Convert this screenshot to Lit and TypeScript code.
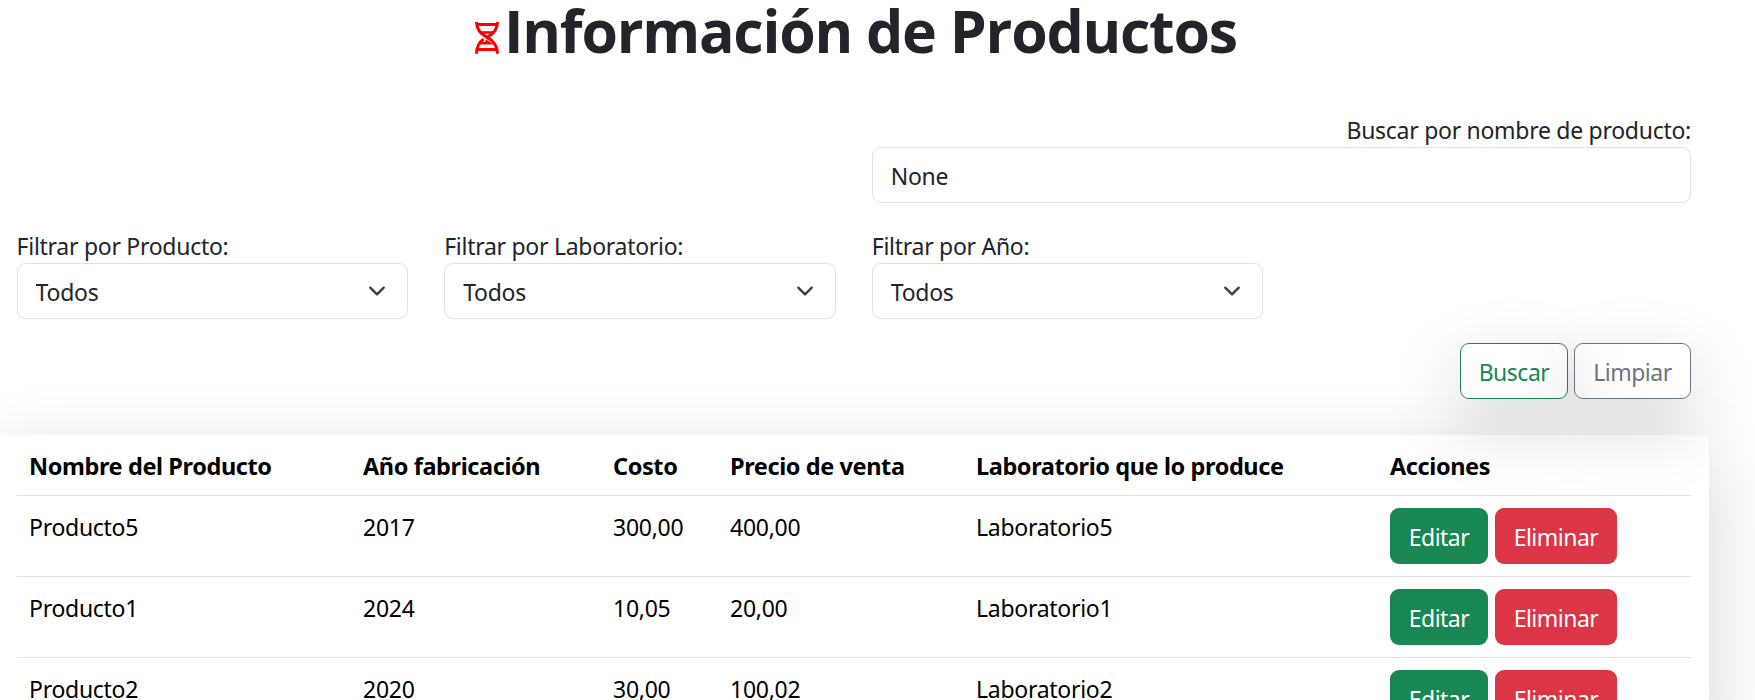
import { LitElement, html, css } from 'lit';
import { customElement, state } from 'lit/decorators.js';

interface Product {
  name: string;
  year: string;
  cost: string;
  price: string;
  lab: string;
}

@customElement('app-root')
export class AppRoot extends LitElement {
  static styles = css`
    :host {
      display: block;
      width: 1755px;
      height: 700px;
      overflow: hidden;
      background: #fff;
      color: #212529;
      font-family: 'Noto Sans', 'Open Sans', sans-serif;
      font-size: 23px;
      letter-spacing: -0.28px;
    }
    * { box-sizing: border-box; }
    .title {
      display: flex;
      align-items: flex-start;
      gap: 5px;
      height: 60px;
      margin: 0 0 51px;
      padding-left: 475px;
      font-family: 'Open Sans', 'Noto Sans', sans-serif;
      font-size: 59px;
      font-weight: 700;
      line-height: 60px;
      letter-spacing: -1.25px;
      white-space: nowrap;
    }
    .dna { flex: none; width: 24px; height: 32px; margin-top: 22px; }
    .filters {
      display: grid;
      grid-template-columns: repeat(4, 1fr);
      gap: 24px 36px;
      width: 1674.4px;
      margin-left: 16.6px;
    }
    .search { grid-column: 3 / 5; text-align: right; }
    .label { display: block; height: 36px; line-height: 38px; white-space: nowrap; }
    .control {
      display: block;
      width: 100%;
      height: 56px;
      margin: 0;
      padding: 2px 18px 0;
      border: 1px solid #dee2e6;
      border-radius: 9px;
      background: #fff;
      color: inherit;
      font: inherit;
      letter-spacing: inherit;
      appearance: none;
      outline: none;
    }
    .picker { display: grid; }
    .picker > * { grid-area: 1 / 1; }
    .chevron {
      width: 18px;
      height: 18px;
      margin-right: 22px;
      align-self: center;
      justify-self: end;
      pointer-events: none;
    }
    .actions {
      grid-column: 1 / 5;
      display: flex;
      justify-content: flex-end;
      gap: 6px;
    }
    .btn {
      display: flex;
      align-items: center;
      justify-content: center;
      height: 56px;
      margin: 0;
      padding: 2px 0 0;
      border: 1px solid transparent;
      border-radius: 9px;
      background: transparent;
      color: #fff;
      font: inherit;
      letter-spacing: -0.5px;
    }
    .raised { box-shadow: 0 24px 72px rgba(0, 0, 0, 0.175); }
    .find { width: 108px; border-color: #198754; color: #198754; }
    .clear { width: 117px; border-color: #6c757d; color: #6c757d; }
    .edit { width: 98px; background: #198754; }
    .remove { width: 122px; background: #dc3545; }
    .card {
      width: 1710px;
      margin: 36px 0 0 -1px;
      padding: 0 18px;
    }
    .row {
      display: grid;
      grid-template-columns: 334px 250px 117px 246px 414px 313px;
      border-bottom: 1px solid #dee2e6;
      color: #000;
    }
    .cell { height: 80px; padding: 12px; line-height: 38px; white-space: nowrap; }
    .head .cell { height: 60px; font-size: 23.5px; font-weight: 700; letter-spacing: -0.4px; }
    .tools { display: flex; gap: 7px; }
  `;

  @state() private products: Product[] = [
    { name: 'Producto5', year: '2017', cost: '300,00', price: '400,00', lab: 'Laboratorio5' },
    { name: 'Producto1', year: '2024', cost: '10,05', price: '20,00', lab: 'Laboratorio1' },
    { name: 'Producto2', year: '2020', cost: '30,00', price: '100,02', lab: 'Laboratorio2' },
  ];

  private filter(label: string) {
    return html`
      <div>
        <label class="label">${label}</label>
        <div class="picker">
          <select class="control" aria-label=${label}><option>Todos</option></select>
          <svg class="chevron" viewBox="0 0 16 16" fill="none" stroke="#343a40" stroke-width="2" stroke-linecap="round" stroke-linejoin="round">
            <path d="m2 5 6 6 6-6" />
          </svg>
        </div>
      </div>
    `;
  }

  render() {
    const heads = ['Nombre del Producto', 'Año fabricación', 'Costo', 'Precio de venta', 'Laboratorio que lo produce', 'Acciones'];
    return html`
      <h1 class="title">
        <svg class="dna" viewBox="0 0 24 32" fill="none" stroke="#f00" stroke-width="3">
          <path d="M1.5 0C1.5 7.5 5.5 12 12 15.3S22.5 23.5 22.5 31.7" />
          <path d="M22.5 0C22.5 7.5 18.5 12 12 15.3" />
          <path d="M8.6 17.2C3.8 20.3 1.5 25 1.5 31.7" />
          <path d="M2 2.5H22" stroke-width="3" />
          <path d="M6 10.5H18" stroke-width="2.6" />
          <path d="M5 21.2H14.6L10.6 18.8" stroke-width="2.6" />
          <path d="M2 27.5H22" stroke-width="3" />
        </svg>
        <span>Información de Productos</span>
      </h1>
      <div class="filters">
        <div class="search">
          <label class="label">Buscar por nombre de producto:</label>
          <input class="control" type="text" .value=${'None'} />
        </div>
        ${this.filter('Filtrar por Producto:')}
        ${this.filter('Filtrar por Laboratorio:')}
        ${this.filter('Filtrar por Año:')}
        <div class="actions">
          <button class="btn find raised">Buscar</button>
          <button class="btn clear raised">Limpiar</button>
        </div>
      </div>
      <div class="card raised">
        <div class="row head">${heads.map((h) => html`<div class="cell">${h}</div>`)}</div>
        ${this.products.map(
          (p) => html`
            <div class="row">
              <div class="cell">${p.name}</div>
              <div class="cell">${p.year}</div>
              <div class="cell">${p.cost}</div>
              <div class="cell">${p.price}</div>
              <div class="cell">${p.lab}</div>
              <div class="cell tools">
                <button class="btn edit">Editar</button>
                <button class="btn remove">Eliminar</button>
              </div>
            </div>
          `
        )}
      </div>
    `;
  }
}
